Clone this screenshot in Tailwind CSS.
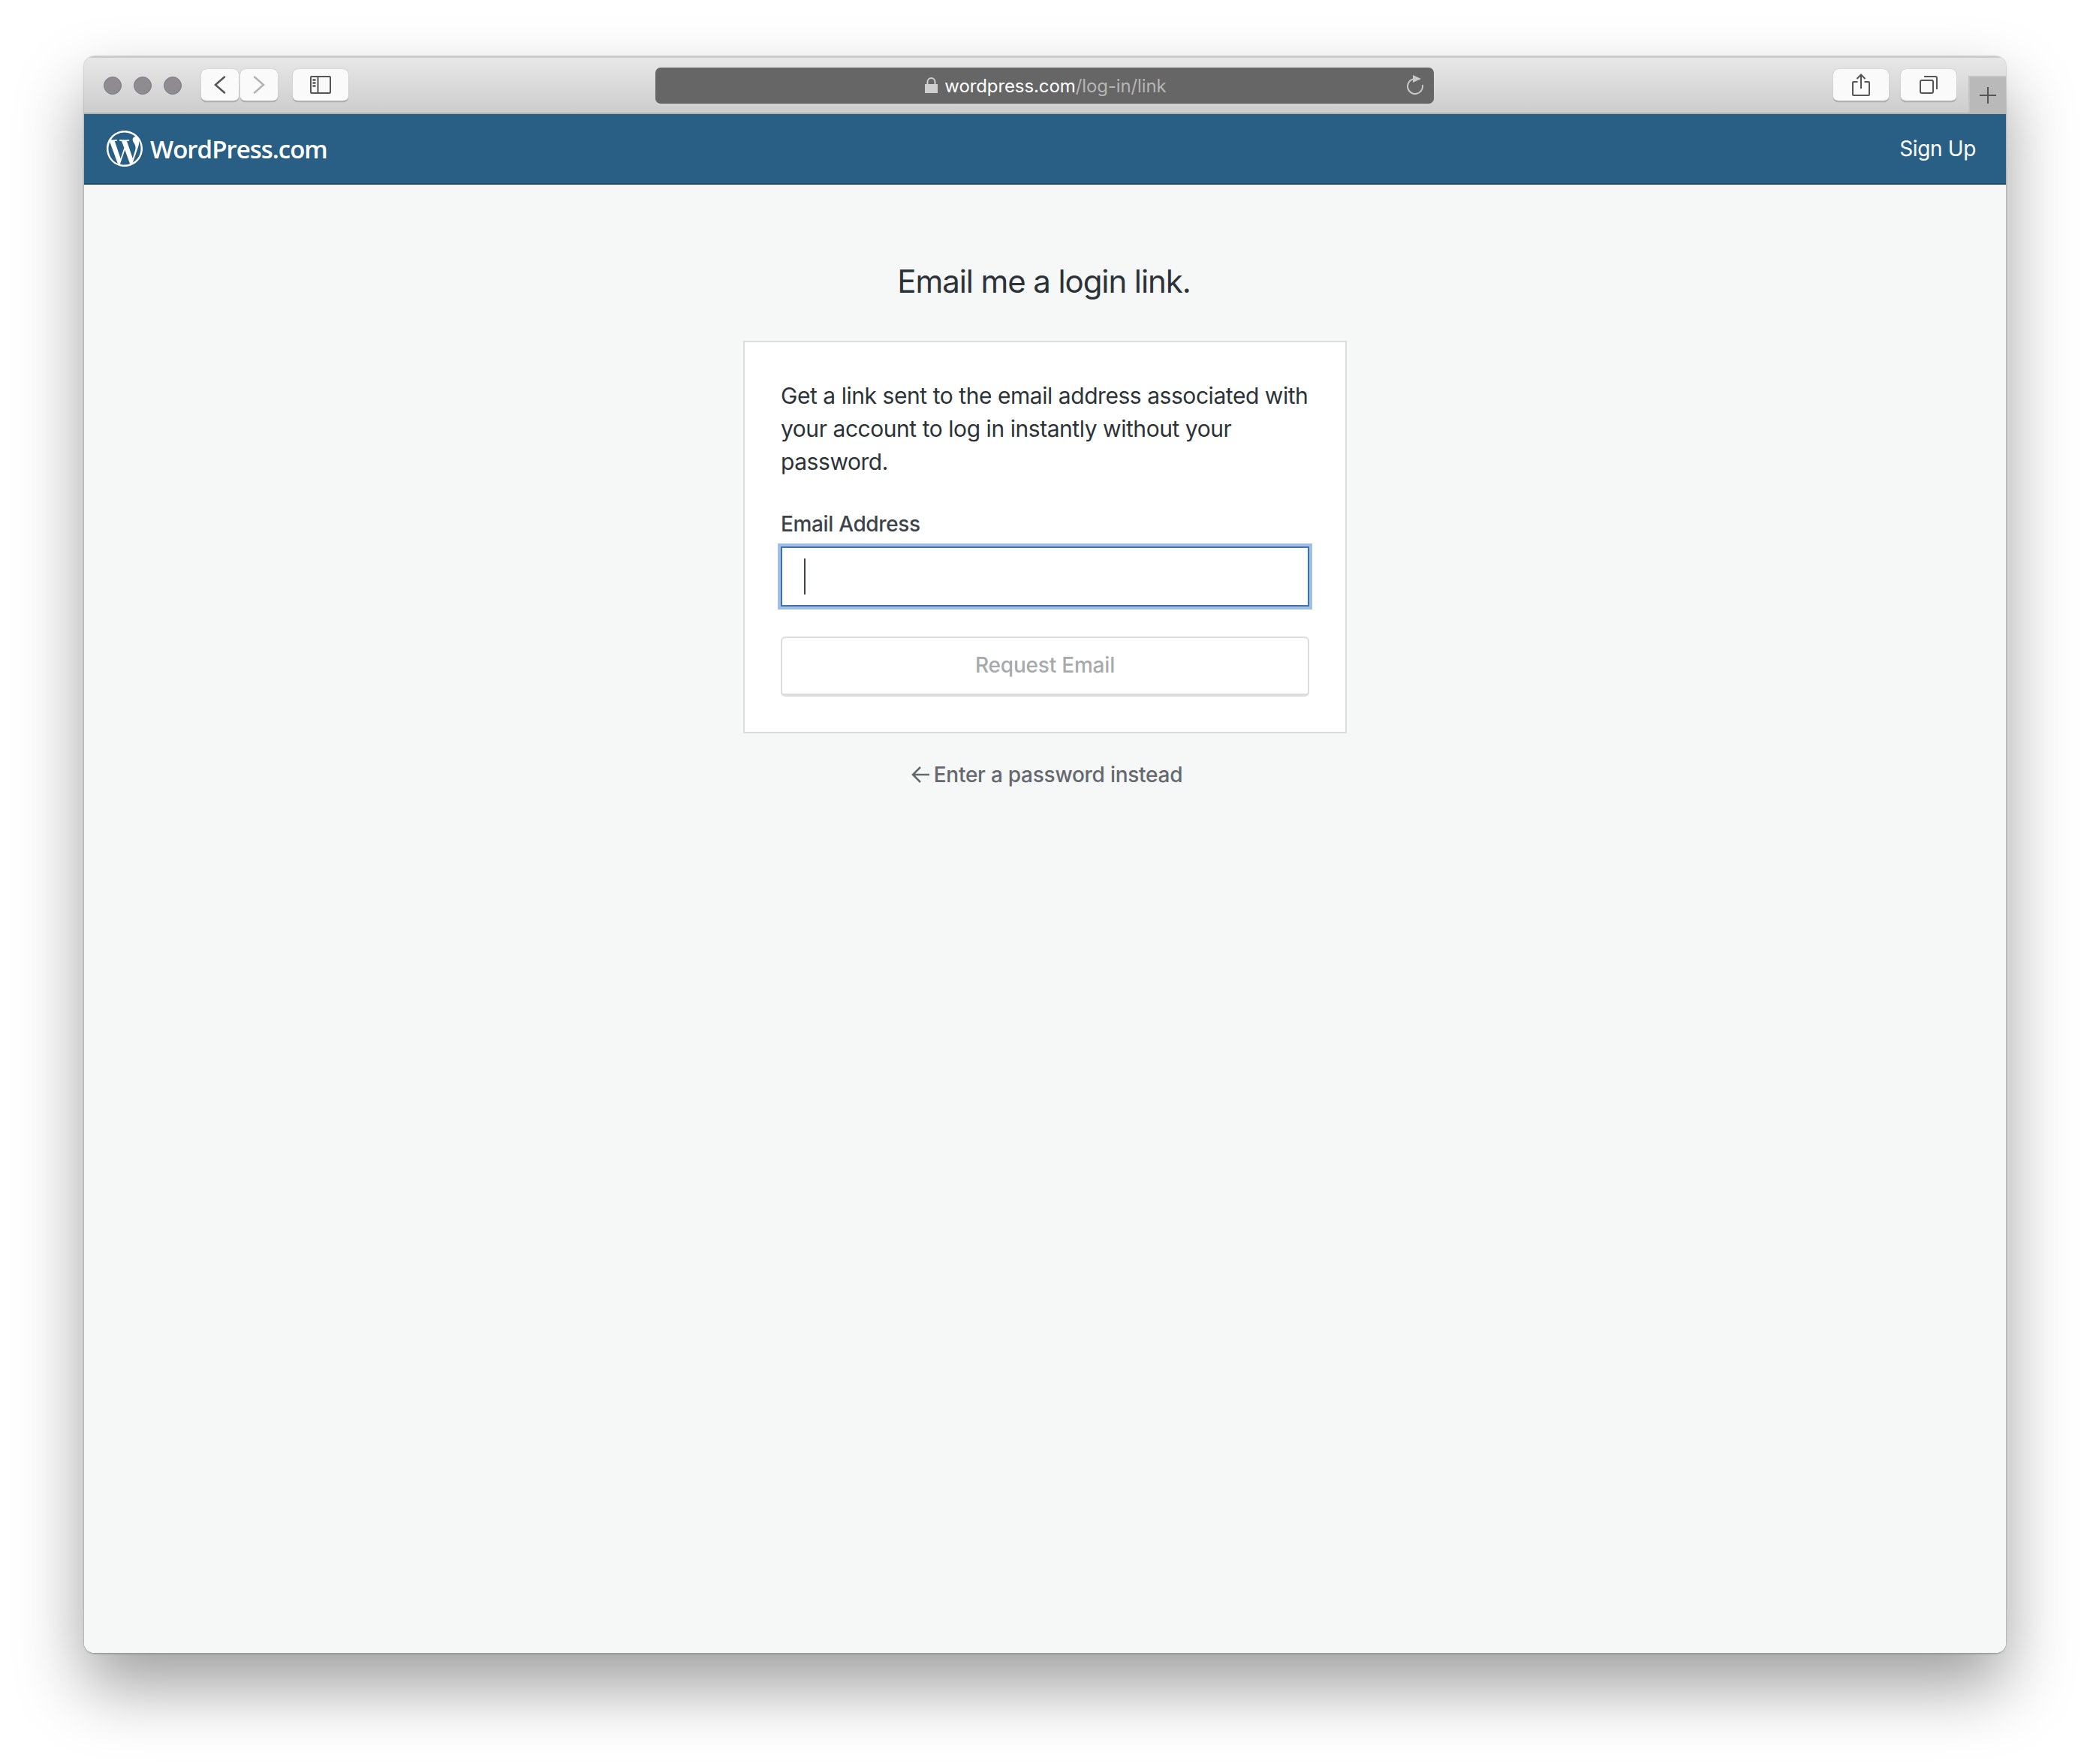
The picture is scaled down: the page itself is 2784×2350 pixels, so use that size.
<!DOCTYPE html>
<html lang="en">
<head>
    <meta charset="UTF-8">
    <title>Email me a login link - WordPress.com</title>
    <script src="https://cdn.jsdelivr.net/npm/@tailwindcss/browser@4"></script>
</head>
<body class="bg-white font-['Inter',sans-serif] h-[2350px] overflow-hidden">
    <div class="ml-[112px] pt-[75px]">
        <div class="w-[2560px] h-[2128px] flex flex-col rounded-[14px] overflow-hidden border-b border-[#9a9a9a] shadow-[0_0_2px_rgba(0,0,0,0.45),0_44px_90px_rgba(0,0,0,0.38)]">

            <!-- browser toolbar -->
            <div class="h-[77px] flex shrink-0 bg-linear-to-b from-[#e7e7e7] to-[#cdcdcd] border-t-2 border-b-2 border-t-[#c9c9c9] border-b-[#b4b4b4] pl-[26px]">
                <div class="flex gap-4 mt-[25px] h-6">
                    <span class="w-6 h-6 rounded-full bg-[#8e8c90] border border-[#7b797d]"></span>
                    <span class="w-6 h-6 rounded-full bg-[#8e8c90] border border-[#7b797d]"></span>
                    <span class="w-6 h-6 rounded-full bg-[#8e8c90] border border-[#7b797d]"></span>
                </div>
                <div class="flex gap-[2px] ml-[26px] mt-[15px] h-[44px]">
                    <button class="w-[50px] h-[44px] flex items-center justify-center rounded-[7px] bg-[#fafafa] border-b-2 border-[#b0b0b0] shadow-[0_0_1px_rgba(0,0,0,0.35)]">
                        <svg width="16" height="24" viewBox="0 0 16 24" fill="none" stroke="#555" stroke-width="2.5" stroke-linecap="round"><path d="M14 1.5 2 12l12 10.5"/></svg>
                    </button>
                    <button class="w-[50px] h-[44px] flex items-center justify-center rounded-[7px] bg-[#fafafa] border-b-2 border-[#b0b0b0] shadow-[0_0_1px_rgba(0,0,0,0.35)]">
                        <svg width="16" height="24" viewBox="0 0 16 24" fill="none" stroke="#b2b2b2" stroke-width="2.5" stroke-linecap="round"><path d="M2 1.5 14 12 2 22.5"/></svg>
                    </button>
                </div>
                <button class="w-[74px] h-[44px] ml-[20px] mt-[15px] flex items-center justify-center rounded-[7px] bg-[#fafafa] border-b-2 border-[#b0b0b0] shadow-[0_0_1px_rgba(0,0,0,0.35)]">
                    <svg width="28" height="24" viewBox="0 0 28 24" fill="none" stroke="#555" stroke-width="2"><rect x="1" y="1" width="26" height="22" rx="1"/><path d="M10.5 1v22"/><path d="M3.5 5.5h4M3.5 9.5h4M3.5 13.5h4" stroke-width="2.4"/></svg>
                </button>
                <div class="w-[1037px] h-[48px] ml-[409px] mt-[13px] relative flex items-center justify-center rounded-[7px] bg-[#666666] border-b border-[#5a5a5a]">
                    <div class="flex items-center gap-[9px] ml-[3px] mt-[2px]">
                        <svg class="-mt-[3px]" width="17" height="21" viewBox="0 0 17 21" fill="#cfcfcf"><path d="M0 9h17v12H0z"/><path d="M3.5 9V6a5 5 0 0 1 10 0v3" fill="none" stroke="#cfcfcf" stroke-width="2"/></svg>
                        <span class="text-[24px] leading-[32px] tracking-[-0.1px] text-white">wordpress.com<span class="text-[#b5b5b5]">/log-in/link</span></span>
                    </div>
                    <svg class="absolute right-[14px] top-[9px]" width="24" height="28" viewBox="0 0 24 28" fill="none" stroke="#c9c9c9" stroke-width="2"><path d="M11 6.2A10 10 0 1 0 22.8 14"/><path d="M10 1l11 5-11 5z" fill="#c9c9c9" stroke="none"/></svg>
                </div>
                <button class="w-[74px] h-[44px] ml-[532px] mt-[15px] flex items-center justify-center rounded-[7px] bg-[#fafafa] border-b-2 border-[#b0b0b0] shadow-[0_0_1px_rgba(0,0,0,0.35)]">
                    <svg width="24" height="30" viewBox="0 0 24 30" fill="none" stroke="#555" stroke-width="2"><path d="M7.5 11H2a1 1 0 0 0-1 1v16a1 1 0 0 0 1 1h20a1 1 0 0 0 1-1V12a1 1 0 0 0-1-1h-5.5"/><path d="M12 20V1.5M6.5 7 12 1.5 17.5 7"/></svg>
                </button>
                <button class="w-[74px] h-[44px] ml-4 mt-[15px] flex items-center justify-center rounded-[7px] bg-[#fafafa] border-b-2 border-[#b0b0b0] shadow-[0_0_1px_rgba(0,0,0,0.35)]">
                    <svg width="24" height="24" viewBox="0 0 24 24" fill="none" stroke="#555" stroke-width="2"><rect x="1" y="6" width="17" height="17" rx="2"/><path d="M6 1h15a2 2 0 0 1 2 2v15"/></svg>
                </button>
                <div class="w-[50px] h-[49px] ml-4 mt-auto flex items-center justify-center bg-[#b9b9b9] border-t-2 border-l-2 border-[#c4c4c4]">
                    <svg width="22" height="22" viewBox="0 0 22 22" stroke="#555" stroke-width="2"><path d="M0 11h22M11 0v22"/></svg>
                </div>
            </div>

            <!-- masterbar -->
            <header class="h-[94px] shrink-0 flex items-center justify-between bg-[#295f84] border-b-2 border-[#1b4d6b] pl-[30px] pr-[40px]">
                <a class="flex items-center gap-[10px]">
                    <svg width="48" height="48" viewBox="2 2 20 20" fill="#fff"><path d="M12 2C6.486 2 2 6.486 2 12c0 5.513 4.486 10 10 10s10-4.487 10-10c0-5.514-4.486-10-10-10zM3.009 12c0-1.298.29-2.529.8-3.65l4.386 11.98C5.1 18.87 3.009 15.676 3.009 12zm8.991 8.99c-.882 0-1.734-.13-2.542-.37l2.7-7.847 2.767 7.58c.018.045.04.086.064.125-.935.33-1.94.51-2.989.51zm1.237-13.207c.542-.028 1.03-.085 1.03-.085.486-.057.429-.77-.057-.743 0 0-1.458.114-2.398.114-.883 0-2.368-.114-2.368-.114-.485-.028-.542.714-.057.743 0 0 .46.057.944.085l1.402 3.84-1.97 5.905-3.277-9.745c.542-.028 1.03-.085 1.03-.085.485-.057.428-.77-.058-.743 0 0-1.457.114-2.397.114-.169 0-.368-.004-.58-.011C6.105 4.41 8.862 3.009 12 3.009c2.338 0 4.468.894 6.067 2.358-.039-.002-.076-.007-.116-.007-.883 0-1.509.769-1.509 1.595 0 .741.428 1.368.884 2.109.342.6.742 1.368.742 2.48 0 .77-.295 1.663-.684 2.907l-.897 2.995-3.25-9.663zm3.28 11.982l2.748-7.945c.513-1.283.684-2.309.684-3.222 0-.331-.022-.638-.061-.925.703 1.283 1.103 2.755 1.103 4.321 0 3.322-1.801 6.222-4.474 7.771z"/></svg>
                    <span class="font-['Open_Sans',sans-serif] font-semibold text-[33px] leading-[48px] tracking-[-1px] text-white mt-[2px]">WordPress.com</span>
                </a>
                <a class="text-[28px] leading-[40px] tracking-[-0.35px] text-white">Sign Up</a>
            </header>

            <!-- login page -->
            <main class="flex-1 flex flex-col items-center bg-[#f6f7f7]">
                <h1 class="mt-[103px] mr-[3px] text-[42px] leading-[52px] tracking-[-1.1px] text-[#2c3338]">Email me a login link.</h1>
                <div class="w-[804px] mt-[53px] bg-white border-2 border-[#dcdcde] pt-[49px] px-[48px] pb-[47px]">
                    <p class="text-[30px] leading-[44px] tracking-[-0.45px] text-[#2c3338]">Get a link sent to the email address associated with your account to log in instantly without your password.</p>
                    <label class="block mt-[39px] text-[28px] leading-[44px] tracking-[-0.35px] font-medium text-[#3c434a]">Email Address</label>
                    <div class="h-[80px] mt-[8px] flex items-center pl-[29px] bg-white border-2 border-[#3d72aa] shadow-[0_0_0_4px_#a0bfe2]">
                        <span class="w-[2px] h-[48px] bg-[#3c434a]"></span>
                    </div>
                    <button class="w-full h-[80px] mt-[40px] pb-[2px] rounded-[6px] bg-white border-2 border-b-4 border-[#dcdcde] text-[28px] tracking-[-0.2px] font-medium text-[#a7aaad]">Request Email</button>
                </div>
                <a class="mt-[33px] ml-[5px] flex items-center gap-[6px] text-[28px] leading-[44px] tracking-[-0.25px] font-medium text-[#646970]">
                    <svg width="24" height="24" viewBox="0 0 24 24" fill="none" stroke="#646970" stroke-width="2.5"><path d="M24 12H3M12 2 2 12l10 10"/></svg>
                    Enter a password instead
                </a>
            </main>
        </div>
    </div>
</body>
</html>
